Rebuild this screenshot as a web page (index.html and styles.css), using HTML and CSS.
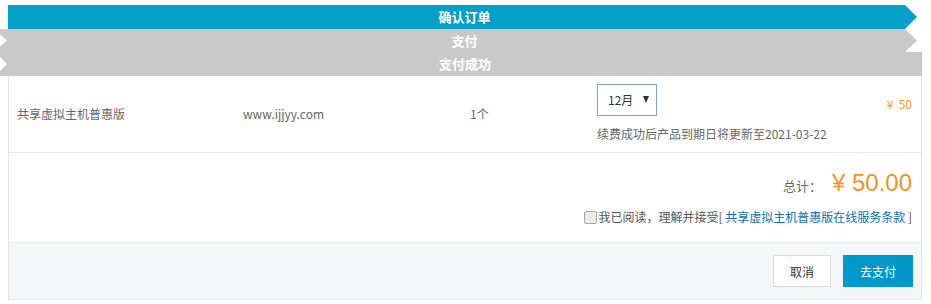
FILE: index.html
```html
<!DOCTYPE html>
<html lang="zh-CN">
<head>
<meta charset="utf-8">
<title>确认订单</title>
<link rel="stylesheet" href="styles.css">
</head>
<body>
<div class="steps">
  <div class="step step-first">确认订单</div>
  <div class="step step-mid">支付</div>
  <div class="step step-last">支付成功</div>
</div>
<div class="panel">
  <div class="row order-row">
    <div class="cell cell-name">共享虚拟主机普惠版</div>
    <div class="cell cell-domain">www.ijjyy.com</div>
    <div class="cell cell-qty">1个</div>
    <div class="cell cell-period">
      <div class="select"><span class="select-text">12月</span><span class="caret"></span></div>
      <div class="note">续费成功后产品到期日将更新至2021-03-22</div>
    </div>
    <div class="cell cell-price">¥&nbsp; 50</div>
  </div>
  <div class="row total-row">
    <div class="total"><span class="total-label">总计：</span><span class="total-amount">¥ 50.00</span></div>
    <div class="agree"><span class="checkbox"></span>我已阅读，理解并接受[ <a class="terms" href="#">共享虚拟主机普惠版在线服务条款</a> ]</div>
  </div>
  <div class="row footer-row">
    <button class="btn btn-cancel">取消</button>
    <button class="btn btn-pay">去支付</button>
  </div>
</div>
</body>
</html>
```

FILE: styles.css
```css
html, body {
  margin: 0;
  padding: 0;
  background: #fff;
}
body {
  font-family: "Noto Sans CJK SC", "Microsoft YaHei", "Noto Sans", sans-serif;
  font-size: 12px;
  color: #666;
  width: 931px;
}
.steps {
  padding-top: 5px;
  display: flex;
  flex-direction: column;
}
.step {
  height: 24px;
  line-height: 24px;
  text-align: center;
  color: #fff;
  font-size: 13px;
  font-weight: bold;
  background: #c9c9c9;
}
.step-first {
  margin-left: 8px;
  width: 909px;
  padding-left: 4px;
  box-sizing: border-box;
  background: #03a1c8;
  clip-path: polygon(0 0, 897px 0, 100% 50%, 897px 100%, 0 100%);
}
.step-mid {
  width: 917px;
  height: 23px;
  line-height: 23px;
  padding-left: 12px;
  box-sizing: border-box;
  clip-path: polygon(0 0, 905px 0, 100% 50%, 905px 100%, 0 100%, 0 calc(50% + 6px), 7px 50%, 0 calc(50% - 6px));
}
.step-last {
  width: 922px;
  padding-left: 8px;
  box-sizing: border-box;
  clip-path: polygon(0 0, 100% 0, 100% 100%, 0 100%, 0 calc(50% + 7px), 7px 50%, 0 calc(50% - 7px));
}
.panel {
  margin: 0 9px 0 8px;
  border-left: 1px solid #e3e3e3;
  border-right: 1px solid #e3e3e3;
  border-bottom: 1px solid #e3e3e3;
}
.row {
  border-bottom: 1px solid #e6e6e6;
}
.row:last-child {
  border-bottom: none;
}
.order-row {
  display: grid;
  grid-template-columns: 226px 227px 127px 1fr auto;
  padding: 0 9px 0 8px;
  height: 76px;
}
.cell {
  align-self: center;
  line-height: 18px;
}
.cell-period {
  align-self: start;
  padding-top: 8px;
}
.select {
  width: 60px;
  height: 32px;
  border: 1px solid #7aa7c7;
  box-sizing: border-box;
  display: flex;
  align-items: center;
  padding: 0 7px 0 10px;
  color: #333;
  font-size: 12px;
}
.caret {
  margin-left: auto;
  width: 0;
  height: 0;
  border-left: 3.5px solid transparent;
  border-right: 3.5px solid transparent;
  border-top: 7px solid #333;
  margin-top: -2px;
}
.note {
  margin-top: 10px;
  line-height: 16px;
}
.cell-price {
  align-self: start;
  padding-top: 19px;
  color: #f49b1a;
}
.total-row {
  height: 89px;
  display: flex;
  flex-direction: column;
  align-items: flex-end;
  padding: 0 9px 0 0;
}
.total {
  margin-top: 15px;
  display: flex;
  align-items: center;
  height: 30px;
}
.total-label {
  color: #666;
  font-size: 13px;
  margin-top: 4px;
  margin-right: 10px;
}
.total-amount {
  color: #f7931e;
  font-size: 24px;
  font-family: "Liberation Sans", "Noto Sans CJK SC", sans-serif;
}
.agree {
  margin-top: 10px;
  color: #555;
  line-height: 18px;
}
.checkbox {
  display: inline-block;
  vertical-align: -2px;
  width: 11px;
  height: 11px;
  border: 1px solid #a5a5a5;
  background: #ececec;
  border-radius: 2px;
  margin-right: 1px;
}
.terms {
  color: #0b6db5;
  text-decoration: none;
}
.footer-row {
  background: #f5f6f8;
  height: 56px;
  display: flex;
  justify-content: flex-end;
  align-items: flex-start;
  gap: 12px;
  padding: 12px 8px 0 0;
  box-sizing: border-box;
}
.btn {
  height: 32px;
  font-family: "Noto Sans CJK SC", "Microsoft YaHei", sans-serif;
  font-size: 12px;
  border-radius: 0;
  cursor: pointer;
  padding: 0;
}
.btn-cancel {
  width: 58px;
  background: #fff;
  border: 1px solid #d9d9d9;
  color: #333;
}
.btn-pay {
  width: 70px;
  background: #0199cb;
  border: 1px solid #0199cb;
  color: #fff;
}
```
